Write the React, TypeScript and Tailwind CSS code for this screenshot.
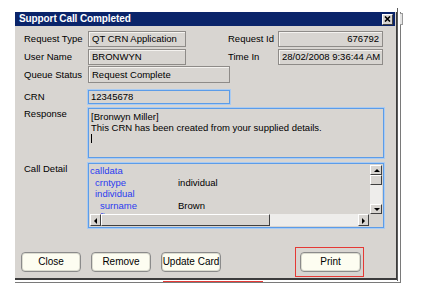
import React from "react";

const field = "h-full bg-[#d8d5d1] border border-[#8e8b88] shadow-[inset_1px_1px_0_#f4f2ef] px-[3px] flex items-center whitespace-nowrap overflow-hidden";
const blueBox = "bg-[#d8d5d1] border border-[#5c9ce8] shadow-[0_0_0_1px_#a9cbf2]";
const btn = "w-[60px] h-[20px] rounded-[4px] bg-[#fdfdf1] border border-[#8b8b8b] shadow-[inset_0_0_0_1px_#dcdcd0] flex items-center justify-center text-[10px]";
const raised = "bg-[#d8d5d1] border-t border-l border-t-white border-l-white border-b border-r border-b-[#404040] border-r-[#404040]";

function Arrow({ dir }: { dir: "up" | "down" | "left" | "right" }) {
  const pts = {
    up: "1,5 4,2 7,5",
    down: "1,2 4,5 7,2",
    left: "5,1 2,4 5,7",
    right: "2,1 5,4 2,7",
  }[dir];
  return (
    <div className={`w-full h-full ${raised} flex items-center justify-center`}>
      <svg width="7" height="7" viewBox="0 0 7 7">
        <polygon points={pts} fill="#000" />
      </svg>
    </div>
  );
}

export default function App() {
  const rows = [
    { k: "calldata", v: "", ind: 1 },
    { k: "crntype", v: "individual", ind: 6 },
    { k: "individual", v: "", ind: 6 },
    { k: "surname", v: "Brown", ind: 11 },
    { k: "firstname", v: "Bronwyn", ind: 11 },
  ];

  return (
    <div className="w-[421px] h-[291px] bg-white relative overflow-hidden font-['Liberation_Sans',Arial,sans-serif] text-[9.5px] text-black leading-none">
      {/* neighbouring window edge */}
      <div className="absolute left-[397px] top-[8px] w-[1px] h-[273px] bg-[#5a5a5a]" />
      <div className="absolute left-[400px] top-[13px] w-[3px] h-[12px] border border-l-0 border-[#9a9a9a] bg-[#e4e4e4]" />

      <div className="ml-[15px] mt-[12px] w-[386px] h-[271px] pr-[2px] pb-[2px] border-r border-b border-[#7a7a7a]">
        <div className="w-[383px] h-[268px] bg-[#d8d5d1] border-r-2 border-b-2 border-[#3c3c3c] flex flex-col">
          {/* title bar */}
          <div className="h-[14px] mr-[1px] bg-[#0a246a] flex items-center justify-between pl-[4px] pr-[2px]">
            <span className="text-white font-bold text-[10px] tracking-[-0.1px]">Support Call Completed</span>
            <div className={`w-[11px] h-[11px] ${raised} flex items-center justify-center`}>
              <svg width="7" height="6" viewBox="0 0 7 6">
                <path d="M1 0.5 L6 5.5 M6 0.5 L1 5.5" stroke="#000" strokeWidth="1.6" />
              </svg>
            </div>
          </div>

          {/* body */}
          <div className="flex flex-col pl-[9px] pt-[5px]">
            <div className="flex items-center h-[16px]">
              <span className="w-[64px]">Request Type</span>
              <div className={`${field} w-[98px]`}>QT CRN Application</div>
              <span className="w-[50px] ml-[42px]">Request Id</span>
              <div className={`${field} w-[105px] justify-end`}>676792</div>
            </div>
            <div className="flex items-center h-[16px] mt-[2px]">
              <span className="w-[64px]">User Name</span>
              <div className={`${field} w-[98px]`}>BRONWYN</div>
              <span className="w-[50px] ml-[42px]">Time In</span>
              <div className={`${field} w-[105px]`}>28/02/2008 9:36:44 AM</div>
            </div>
            <div className="flex items-center h-[17px] mt-[1px]">
              <span className="w-[64px]">Queue Status</span>
              <div className={`${field} w-[142px]`}>Request Complete</div>
            </div>

            <div className="flex items-center h-[14px] mt-[7px]">
              <span className="w-[64px]">CRN</span>
              <div className={`${blueBox} h-full w-[142px] px-[2px] flex items-center`}>12345678</div>
            </div>

            <div className="flex items-start mt-[4px]">
              <span className="w-[64px] pt-[1px]">Response</span>
              <div className={`${blueBox} w-[296px] h-[50px] px-[2px] pt-[2px] leading-[11px]`}>
                <div>[Bronwyn Miller]</div>
                <div>This CRN has been created from your supplied details.</div>
                <div className="w-[1px] h-[9px] bg-black mt-[1px]" />
              </div>
            </div>

            <div className="flex items-start mt-[5px]">
              <span className="w-[64px] pt-[1px]">Call Detail</span>
              <div className={`${blueBox} w-[296px] h-[65px] flex flex-col`}>
                <div className="flex flex-1 min-h-0">
                  <div className="flex-1 overflow-hidden pt-[1px] leading-[11.5px]">
                    {rows.map((r) => (
                      <div key={r.k + r.ind} className="flex whitespace-nowrap">
                        <span className="w-[89px] shrink-0 text-[#2a3cf0]" style={{ paddingLeft: r.ind }}>{r.k}</span>
                        <span>{r.v}</span>
                      </div>
                    ))}
                  </div>
                  <div className="w-[12px] flex flex-col mr-[1px] pt-[1px]">
                    <div className="h-[10px]"><Arrow dir="up" /></div>
                    <div className={`h-[10px] ${raised}`} />
                    <div className="flex-1 bg-[#eeedeb]" />
                    <div className="h-[10px]"><Arrow dir="down" /></div>
                  </div>
                </div>
                <div className="h-[13px] flex pl-[1px] pb-[1px]">
                  <div className="w-[11px]"><Arrow dir="left" /></div>
                  <div className={`w-[169px] ${raised}`} />
                  <div className="w-[88px] bg-[#eeedeb]" />
                  <div className="w-[11px]"><Arrow dir="right" /></div>
                  <div className="flex-1 bg-[#d8d5d1]" />
                </div>
              </div>
            </div>
          </div>

          {/* buttons */}
          <div className="flex items-start pl-[6px] mt-[19px]">
            <div className="flex gap-[10px] mt-[5px]">
              <div className={btn}>Close</div>
              <div className={btn}>Remove</div>
              <div className={btn}>Update Card</div>
            </div>
            <div className="ml-[74px] border border-[#e53935] pl-[4px] pr-[2px] pt-[4px] pb-[4px]">
              <div className={`${btn} w-[61px]`}>Print</div>
            </div>
          </div>
        </div>
      </div>

      {/* red underline annotation */}
      <div className="absolute left-[163px] top-[281px] w-[100px] h-[1px] bg-[#e53935]" />
    </div>
  );
}
